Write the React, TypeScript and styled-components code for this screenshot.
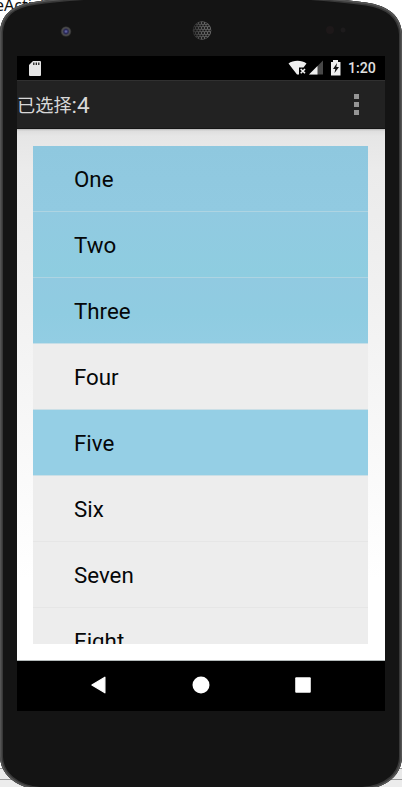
import React from "react";
import styled, { createGlobalStyle } from "styled-components";

const GlobalStyle = createGlobalStyle`
  * { box-sizing: border-box; }
  body {
    margin: 0;
    background: #fff;
    font-family: Roboto, "Noto Sans CJK SC", sans-serif;
    overflow: hidden;
  }
`;

const Desktop = styled.div`
  position: relative;
  width: 402px;
  height: 787px;
  overflow: hidden;
  background: linear-gradient(#fff 768px, #999 768px, #999 769px, #e9e9e9 769px, #e9e9e9 779px, #999 779px, #999 780px, #ececec 780px);
`;

const WindowLabel = styled.span`
  position: absolute;
  left: -5px;
  top: -5px;
  font: 16px/20px "Noto Sans", sans-serif;
  color: #111;
`;

const DeviceArt = styled.svg`
  position: absolute;
  inset: 0;
`;

const Screen = styled.main`
  position: relative;
  display: flex;
  flex-direction: column;
  width: 368px;
  height: 655px;
  margin: 56px 0 0 17px;
  background: #000;
`;

const StatusBar = styled.header`
  flex: 0 0 24px;
  display: flex;
  align-items: center;
  justify-content: space-between;
  padding: 0 8px 0 12px;
`;

const StatusIcons = styled.div`
  display: flex;
  align-items: center;
`;

const Clock = styled.span`
  width: 29px;
  margin-left: 6px;
  color: #e0e0e0;
  font-size: 14.2px;
  line-height: 24px;
  font-weight: 500;
  white-space: nowrap;
`;

const ActionBar = styled.div`
  flex: 0 0 49px;
  display: flex;
  align-items: center;
  justify-content: space-between;
  padding-right: 26px;
  background: #222;
  border-top: 1px solid #303030;
  border-bottom: 1px solid #151515;
`;

const Title = styled.h1`
  display: flex;
  align-items: baseline;
  margin: 0;
  color: #d8d8d8;
  font-size: 22.5px;
  font-weight: 400;
  line-height: 46px;
`;

const TitlePrefix = styled.span`
  font-family: "Noto Sans CJK SC", sans-serif;
  font-size: 18.2px;
  line-height: 44px;
  padding-bottom: 1px;
  transform: translateY(-1px);
`;

const MenuDots = styled.div`
  display: flex;
  flex-direction: column;
  gap: 3px;
  i {
    width: 5px;
    height: 5px;
    background: #969696;
  }
`;

const Content = styled.section`
  flex: 0 0 532px;
  padding: 17px 17px 16px 16px;
  background: linear-gradient(#b9b9b9 0, #dedede 2px, #e6e6e6 7px, #ebebeb 40px, #f0f0f0 150px, #fff 450px);
  border-bottom: 1px solid #b4baba;
`;

const List = styled.ul`
  height: 498px;
  margin: 0;
  padding: 0;
  overflow: hidden;
  list-style: none;
  background: #ededed;
`;

const Item = styled.li<{ $fill: string; $line: string }>`
  height: 66px;
  padding-left: 41px;
  background: ${(p) => p.$fill};
  border-bottom: 1px solid ${(p) => p.$line};
  color: #050708;
  font-size: 22.3px;
  line-height: 67px;
`;

const NavBar = styled.nav`
  flex: 0 0 50px;
  display: flex;
  align-items: center;
  justify-content: space-between;
  padding: 0 74px 2px 73px;
`;

const rows = [
  { label: "One", fill: "linear-gradient(#8fc8df, #91cae1)", line: "#aed4e2" },
  { label: "Two", fill: "linear-gradient(#91cae1, #8ecde0)", line: "#aed4e2" },
  { label: "Three", fill: "linear-gradient(#91cae1, #8fcce1 55%, #92cde3)", line: "#c6dee7" },
  { label: "Four", fill: "#ededed", line: "#cbdfe6" },
  { label: "Five", fill: "#95cfe5", line: "#cbdfe6" },
  { label: "Six", fill: "#ededed", line: "#e6e6e6" },
  { label: "Seven", fill: "#ededed", line: "#e6e6e6" },
  { label: "Eight", fill: "#ededed", line: "#e6e6e6" },
];

const bodyPath =
  "M0 32 C1 16 11 5 34 2 C60 -2 110 -6 201 -6 C292 -6 330 -2 366 2.5 C389 6 401 16 402 34 V756 C402 774 388 788 362 790 H40 C16 788 0 774 0 756 Z";

const speakerHoles = [-7.5, -5, -2.5, 0, 2.5, 5, 7.5].flatMap((dy, row) =>
  [-8, -5, -2, 1, 4, 7].map((dx) => ({ x: 202 + dx + (row % 2) * 1.5, y: 30.5 + dy }))
);

function Device() {
  return (
    <DeviceArt width="402" height="787" viewBox="0 0 402 787">
      <defs>
        <radialGradient id="lens">
          <stop offset="0" stopColor="#7070b8" />
          <stop offset="0.4" stopColor="#252550" />
          <stop offset="0.7" stopColor="#505050" />
          <stop offset="1" stopColor="#252525" />
        </radialGradient>
        <linearGradient id="speaker">
          <stop offset="0" stopColor="#303030" />
          <stop offset="0.5" stopColor="#626262" />
          <stop offset="1" stopColor="#6c6c6c" />
        </linearGradient>
        <clipPath id="bodyClip"><path d={bodyPath} /></clipPath>
        <clipPath id="speakerClip"><circle cx="202" cy="30.5" r="8.8" /></clipPath>
      </defs>
      <path d={bodyPath} fill="#141414" />
      <g clipPath="url(#bodyClip)" fill="none">
        <path d={bodyPath} stroke="#383838" strokeWidth="6" />
        <path d={bodyPath} stroke="#555" strokeWidth="3" />
      </g>
      <circle cx="66" cy="31.5" r="5.3" fill="url(#lens)" />
      <circle cx="202" cy="30.5" r="9.3" fill="url(#speaker)" />
      <g clipPath="url(#speakerClip)">
        {speakerHoles.map((hole) => (
          <rect key={`${hole.x}-${hole.y}`} x={hole.x - 1} y={hole.y - 0.8} width="2" height="1.6" fill="#151515" />
        ))}
      </g>
      <circle cx="330" cy="30" r="4" fill="#1d1819" />
      <circle cx="343" cy="30" r="2.5" fill="#1d1b1c" />
    </DeviceArt>
  );
}

export default function App() {
  return (
    <>
      <GlobalStyle />
      <Desktop>
        <WindowLabel>eActivi</WindowLabel>
        <Device />
        <Screen>
          <StatusBar>
            <svg width="12" height="15" viewBox="0 0 12 15">
              <path d="M4 0H11Q12 0 12 1V14Q12 15 11 15H1Q0 15 0 14V4Z" fill="#e5e5e5" />
              <path d="M4.8 1.5V4M7.3 1.5V4M9.8 1.5V4" stroke="#111" strokeWidth="1.2" />
            </svg>
            <StatusIcons>
              <svg width="54" height="16" viewBox="0 0 54 16">
                <path d="M0.5 3.5C5 -0.1 14 -0.1 18.5 3.5L15.5 7.5H11V14.5H9Z" fill="#eee" />
                <path d="M12.7 9L17 13.3M17 9L12.7 13.3" stroke="#eee" strokeWidth="1.6" />
                <path d="M21 14.5L35 0.5V14.5Z" fill="#484848" />
                <path d="M21 14.5L29.5 6V14.5Z" fill="#eee" />
                <path d="M43 2H45V0H50V2H52.5V15.5H43Z" fill="#eee" />
                <path d="M49 3L45 9H47.3L46.5 13L51 7H48.4Z" fill="#111" />
              </svg>
              <Clock>1:20</Clock>
            </StatusIcons>
          </StatusBar>
          <ActionBar>
            <Title><TitlePrefix>已选择</TitlePrefix>:4</Title>
            <MenuDots><i /><i /><i /></MenuDots>
          </ActionBar>
          <Content>
            <List>
              {rows.map((row) => (
                <Item key={row.label} $fill={row.fill} $line={row.line}>{row.label}</Item>
              ))}
            </List>
          </Content>
          <NavBar>
            <svg width="16" height="18" viewBox="0 0 16 18">
              <path d="M14.9 1.2V16.8L1.9 9Z" fill="#fff" stroke="#fff" strokeWidth="1.2" strokeLinejoin="round" />
            </svg>
            <svg width="18" height="18" viewBox="0 0 18 18">
              <circle cx="9" cy="9" r="8.5" fill="#fff" />
            </svg>
            <svg width="16" height="16" viewBox="0 0 16 16">
              <rect x="0.2" y="0.2" width="15.6" height="15.6" rx="1" fill="#fff" />
            </svg>
          </NavBar>
        </Screen>
      </Desktop>
    </>
  );
}
